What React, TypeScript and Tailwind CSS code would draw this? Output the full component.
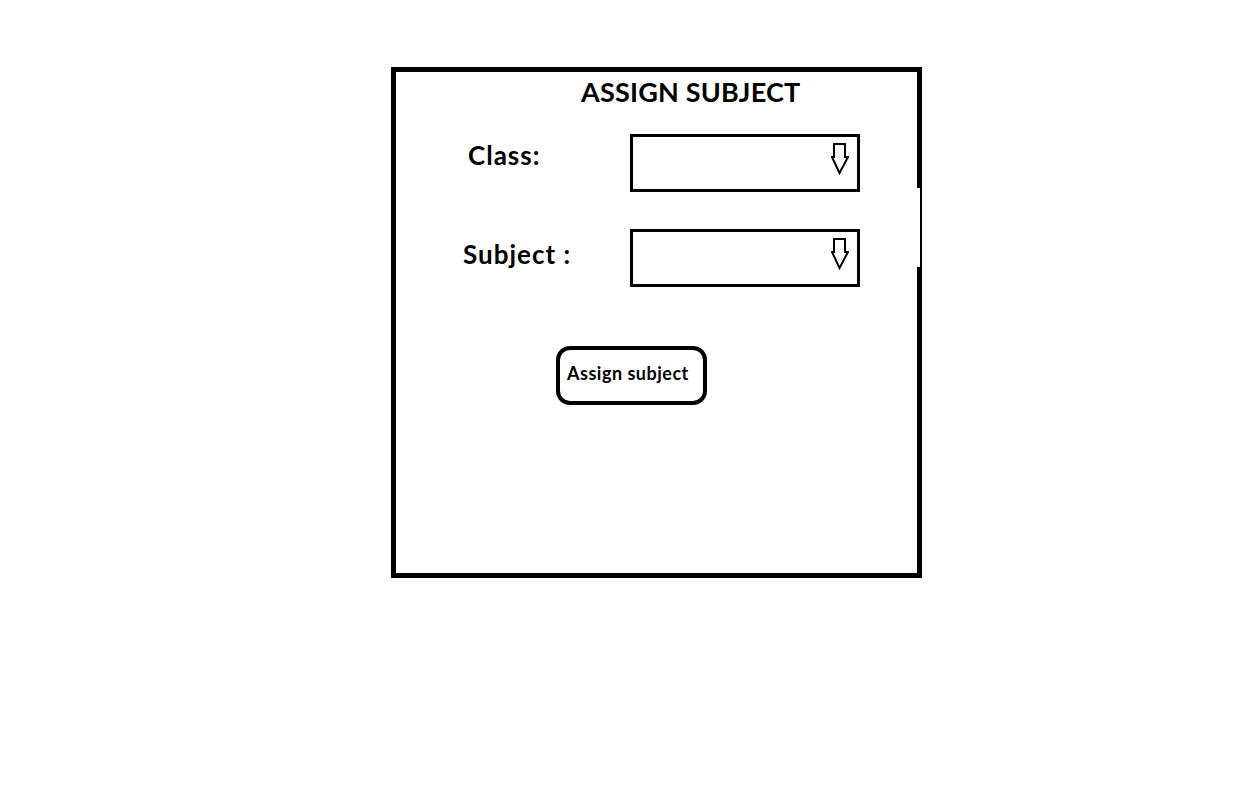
import React from "react";

function DownArrow() {
  return (
    <svg width="18" height="32" viewBox="0 0 18 32" className="block">
      <polygon
        points="3,1 14,1 14,14 17,14 8.5,30 1,14 3,14"
        fill="white"
        stroke="black"
        strokeWidth={2}
        strokeLinejoin="miter"
      />
    </svg>
  );
}

function SelectBox() {
  return (
    <div className="w-[230px] h-[58px] border-[3px] border-black flex items-start justify-end pt-[6px] pr-[8px]">
      <DownArrow />
    </div>
  );
}

export default function App() {
  return (
    <div
      className="w-[1255px] h-[801px] bg-white pl-[391px] pt-[67px]"
      style={{ fontFamily: "Lato, 'Open Sans', sans-serif" }}
    >
      <div className="relative w-[531px] h-[511px] border-[5px] border-black flex flex-col">
        {/* gap in the right edge of the sketch */}
        <div className="absolute -right-[3px] top-[116px] w-[3px] h-[79px] bg-white" />

        <h1 className="ml-[185px] mt-[5px] text-[27px] tracking-[0.2px] font-bold leading-[30px] text-black">
          ASSIGN SUBJECT
        </h1>

        <div className="flex items-start mt-[27px]">
          <div className="w-[234px] pl-[72px] pt-[6px] text-[26px] tracking-[1px] font-bold leading-[30px]">
            Class:
          </div>
          <SelectBox />
        </div>

        <div className="flex items-start mt-[37px]">
          <div className="w-[234px] pl-[67px] pt-[10px] text-[26px] tracking-[1px] font-bold leading-[30px]">
            Subject :
          </div>
          <SelectBox />
        </div>

        <div className="ml-[160px] mt-[59px]">
          <div className="w-[151px] h-[59px] border-4 border-black rounded-[14px] flex items-center pl-[7px] pb-[4px] text-[18px] tracking-[0.5px] font-bold">
            Assign subject
          </div>
        </div>
      </div>
    </div>
  );
}
